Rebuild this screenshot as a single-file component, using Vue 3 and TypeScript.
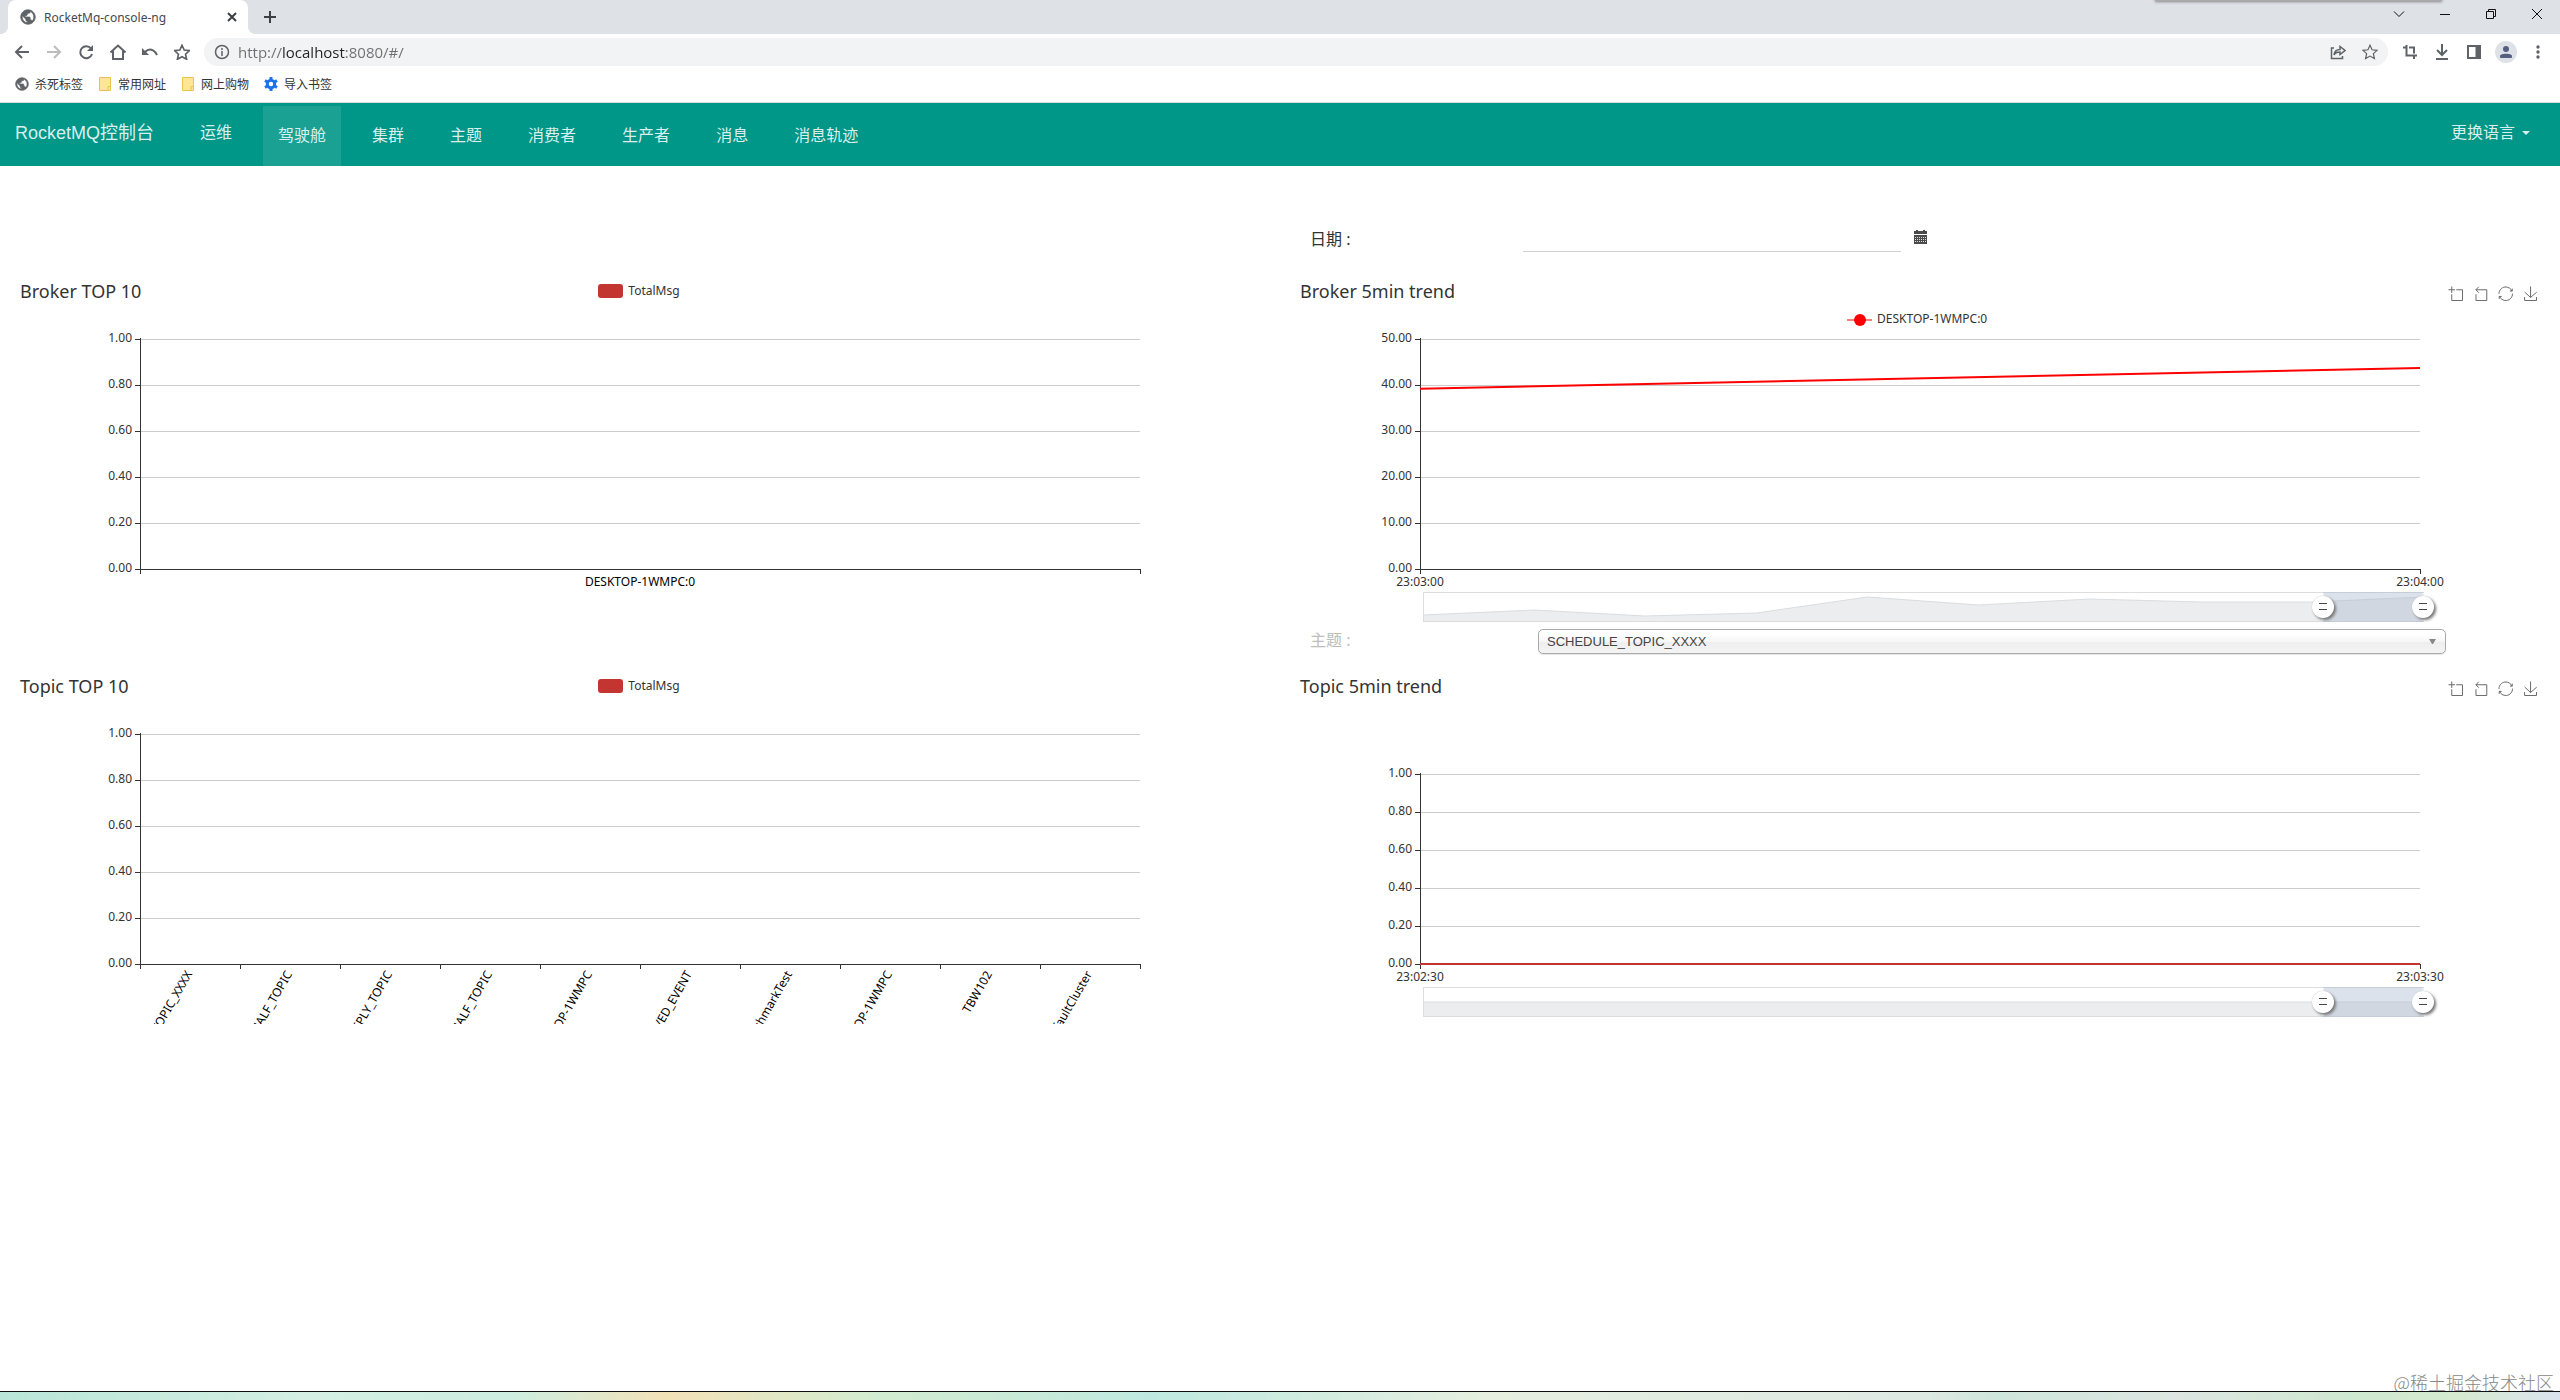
<script setup lang="ts">
import { computed, onMounted, onUnmounted, reactive, ref } from 'vue'

interface ChartModel {
  id: string
  title: string
  kind: 'bar' | 'trend'
  top: number
  yLabels: string[]
  categories: string[]
  series: { name: string; color: string; values: number[]; max: number } | null
  legend: boolean
  overview: number[]
}

const charts = reactive<ChartModel[]>([
  {
    id: 'broker-top', title: 'Broker TOP 10', kind: 'bar', top: 60,
    yLabels: ['1.00', '0.80', '0.60', '0.40', '0.20', '0.00'],
    categories: ['DESKTOP-1WMPC:0'], series: null, legend: true, overview: [],
  },
  {
    id: 'broker-trend', title: 'Broker 5min trend', kind: 'trend', top: 60,
    yLabels: ['50.00', '40.00', '30.00', '20.00', '10.00', '0.00'],
    categories: ['23:03:00', '23:04:00'],
    series: { name: 'DESKTOP-1WMPC:0', color: '#ff0000', values: [39.2, 43.7], max: 50 },
    legend: true, overview: [336, 331, 337, 334, 318, 326, 320, 323, 323, 318],
  },
  {
    id: 'topic-top', title: 'Topic TOP 10', kind: 'bar', top: 60,
    yLabels: ['1.00', '0.80', '0.60', '0.40', '0.20', '0.00'],
    categories: [
      'SCHEDULE_TOPIC_XXXX', 'RMQ_SYS_TRANS_HALF_TOPIC', 'DefaultCluster_REPLY_TOPIC',
      'RMQ_SYS_TRANS_OP_HALF_TOPIC', 'DESKTOP-1WMPC', 'OFFSET_MOVED_EVENT',
      'BenchmarkTest', 'DESKTOP-1WMPC', 'TBW102', 'DefaultCluster',
    ],
    series: null, legend: true, overview: [],
  },
  {
    id: 'topic-trend', title: 'Topic 5min trend', kind: 'trend', top: 100,
    yLabels: ['1.00', '0.80', '0.60', '0.40', '0.20', '0.00'],
    categories: ['23:02:30', '23:03:30'],
    series: { name: 'SCHEDULE_TOPIC_XXXX', color: '#c23531', values: [0, 0], max: 1 },
    legend: false, overview: [328, 328],
  },
])

const zoom = reactive<Record<string, { start: number; end: number }>>({
  'broker-trend': { start: 90, end: 100 },
  'topic-trend': { start: 90, end: 100 },
})

// Chart geometry: the plot keeps a 10% margin on each side of its canvas.
const BOTTOM = 290
const HEAD = 28
const viewport = ref(window.innerWidth)
const width = computed(() => Math.round(viewport.value / 2 - 30))
const left = computed(() => Math.round(width.value * 0.1))
const right = computed(() => width.value - left.value)
const plot = computed(() => right.value - left.value)

const onResize = () => { viewport.value = window.innerWidth }
onMounted(() => window.addEventListener('resize', onResize))
onUnmounted(() => window.removeEventListener('resize', onResize))

const rowY = (c: ChartModel, i: number) => c.top + ((BOTTOM - c.top) / 5) * i
const bandX = (c: ChartModel, i: number) => left.value + (plot.value / c.categories.length) * i
const seriesPoints = (c: ChartModel) =>
  c.series!.values
    .map((v, i, all) => `${left.value + (plot.value / (all.length - 1)) * i},${BOTTOM - (v / c.series!.max) * (BOTTOM - c.top)}`)
    .join(' ')
const overviewPoints = (c: ChartModel) =>
  c.overview.map((y, i, all) => `${left.value + 3 + (plot.value / (all.length - 1)) * i},${y}`).join(' ')

const menu = ['驾驶舱', '集群', '主题', '消费者', '生产者', '消息', '消息轨迹']
const active = ref('驾驶舱')
const url = ref('http://localhost:8080/#/')
const date = ref('')
const topic = ref('SCHEDULE_TOPIC_XXXX')

const tools = [
  { name: '区域缩放', d: 'M0,13.5h26.9 M13.5,26.9V0 M32.1,13.5H58V58H13.5 V32.1' },
  { name: '区域缩放还原', d: 'M22,1.4L9.9,13.5l12.3,12.3 M10.3,13.5H54.9v44.6 H10.3v-26' },
  { name: '还原', d: 'M47,18.9h9.8V8.7 M56.3,20.1 C52.1,9,40.5,0.6,26.8,2.1C12.6,3.7,1.6,16.2,2.1,30.6 M13,41.1H3.1v10.2 M3.7,39.9c4.2,11.1,15.8,19.5,29.5,18 c14.2-1.6,25.2-14.1,24.7-28.5' },
  { name: '保存为图片', d: 'M4.7,22.9L29.3,45.5L54.7,23.4M4.6,43.6L4.6,58L53.8,58L53.8,43.6M29.2,45.1L29.2,0' },
]

const globe = 'M12 2C6.48 2 2 6.48 2 12s4.48 10 10 10 10-4.48 10-10S17.52 2 12 2zm-1 17.93c-3.95-.49-7-3.85-7-7.93 0-.62.08-1.21.21-1.79L9 15v1c0 1.1.9 2 2 2v1.93zm6.9-2.54c-.26-.81-1-1.39-1.9-1.39h-1v-3c0-.55-.45-1-1-1H8v-2h2c.55 0 1-.45 1-1V7h2c1.1 0 2-.9 2-2v-.41c2.93 1.19 5 4.06 5 7.41 0 2.08-.8 3.97-2.1 5.39z'
const star = 'M12 3.5l2.6 5.7 6.2.7-4.6 4.2 1.3 6.1-5.5-3.1-5.5 3.1 1.3-6.1-4.6-4.2 6.2-.7z'
</script>

<template>
  <div class="window">
    <header class="chrome">
      <div class="tabstrip">
        <div class="tab">
          <svg class="fav" viewBox="1 1 22 22"><path :d="globe" fill="#5f6368" stroke="#5f6368" /></svg>
          <span class="tab-title">RocketMq-console-ng</span>
          <button class="ico" aria-label="关闭标签页"><svg viewBox="0 0 16 16"><path d="M4 4l8 8M12 4l-8 8" stroke="#3c4043" stroke-width="2" /></svg></button>
        </div>
        <button class="ico add" aria-label="新标签页"><svg viewBox="0 0 16 16"><path d="M8 2v12M2 8h12" stroke="#3c4043" stroke-width="2" /></svg></button>
        <div class="edge"></div>
        <div class="winctl">
          <button aria-label="搜索标签页"><svg viewBox="0 0 12 12"><path d="M1 3.5l5 5 5-5" /></svg></button>
          <button aria-label="最小化"><svg viewBox="0 0 12 12"><path d="M1 6.5h10" /></svg></button>
          <button aria-label="向下还原"><svg viewBox="0 0 12 12"><path d="M1.5 3.5h7v7h-7zM3.5 3.5v-2h7v7h-2" /></svg></button>
          <button aria-label="关闭"><svg viewBox="0 0 12 12"><path d="M1 1l10 10M11 1L1 11" /></svg></button>
        </div>
      </div>

      <div class="toolbar">
        <div class="navbtns">
          <button aria-label="后退"><svg viewBox="0 0 16 16"><path d="M15 8H2M8 2L2 8l6 6" /></svg></button>
          <button class="off" aria-label="前进"><svg viewBox="0 0 16 16"><path d="M1 8h13M8 2l6 6-6 6" /></svg></button>
          <button aria-label="重新加载"><svg viewBox="0 0 16 16"><path d="M13 4.5A6 6 0 1 0 14 10" /><path d="M15 1v6H9z" fill="#5f6368" stroke="none" /></svg></button>
          <button aria-label="主页"><svg viewBox="0 0 16 16"><path d="M.5 8.5L8 1.5l7.5 7M3 7v8h10V7" /></svg></button>
          <button aria-label="撤销"><svg viewBox="0 0 16 16"><path d="M3 8c4-4 9-3 12 3" /><path d="M0 4v7h7z" fill="#5f6368" stroke="none" /></svg></button>
          <button aria-label="收藏"><svg viewBox="3 2 18 19"><path :d="star" /></svg></button>
        </div>
        <div class="omnibox">
          <svg class="info" viewBox="0 0 16 16"><circle cx="8" cy="8" r="6.5" /><path d="M8 7v5M8 4v2" /></svg>
          <input v-model="url" class="url" type="text" aria-label="地址" />
          <button aria-label="分享"><svg viewBox="0 0 16 16"><path d="M4 4H1.5v10.5h11V12M4 11c.5-4 2.5-5.500 6-5.500V2.500l5 4-5 4V8c-3 0-5 1-6 3z" /></svg></button>
          <button aria-label="为此网页添加书签"><svg viewBox="2 2 20 20"><path :d="star" /></svg></button>
        </div>
        <div class="ext">
          <button aria-label="截图"><svg viewBox="0 0 16 16"><path d="M1 3.5h3M4.5 1v10.5H15M7 3.5h5v6M12 12v3" /></svg></button>
          <button aria-label="下载"><svg viewBox="0 0 16 16"><path d="M8 0v11M3 6l5 5 5-5M2 15h12" /></svg></button>
          <button aria-label="侧边栏"><svg viewBox="0 0 16 16"><path d="M2 2h12v12H2z" /><path d="M9.5 2h5v12h-5z" fill="#5f6368" stroke="none" /></svg></button>
          <button class="avatar" aria-label="个人资料"><svg viewBox="0 0 16 16"><circle cx="8" cy="5" r="3" /><path d="M2 14v-2c0-3 12-3 12 0v2z" /></svg></button>
          <button aria-label="更多"><svg viewBox="0 0 16 16"><g fill="#5f6368" stroke="none"><circle cx="8" cy="3" r="1.7" /><circle cx="8" cy="8" r="1.7" /><circle cx="8" cy="13" r="1.7" /></g></svg></button>
        </div>
      </div>

      <nav class="bookmarks" aria-label="书签">
        <a href="#/"><svg viewBox="1 1 22 22"><path :d="globe" fill="#5f6368" stroke="#5f6368" /></svg>杀死标签</a>
        <a href="#/"><svg viewBox="0 0 14 14"><path d="M1.5.5h11v13h-11zM10 13.5v-4h2.5" fill="#ffe694" stroke="#e9c44a" /></svg>常用网址</a>
        <a href="#/"><svg viewBox="0 0 14 14"><path d="M1.5.5h11v13h-11zM10 13.5v-4h2.5" fill="#ffe694" stroke="#e9c44a" /></svg>网上购物</a>
        <a href="#/"><svg viewBox="0 0 14 14"><circle cx="7" cy="7" r="3.7" fill="none" stroke="#1a73e8" stroke-width="3" /><path d="M7 0v2.5M7 11.5V14M1 3.5l2 1.2M11 9.3l2 1.2M1 10.5l2-1.2M11 4.7l2-1.2" stroke="#1a73e8" stroke-width="3" /></svg>导入书签</a>
      </nav>
    </header>

    <nav class="navbar" aria-label="主导航">
      <a class="brand" href="#/">RocketMQ控制台</a>
      <a class="ops" href="#/ops">运维</a>
      <ul class="menu">
        <li v-for="m in menu" :key="m">
          <a href="#/" :class="{ active: m === active }" @click.prevent="active = m">{{ m }}</a>
        </li>
      </ul>
      <button class="lang">更换语言<svg viewBox="0 0 8 4"><path d="M0 0h8L4 4z" fill="currentColor" /></svg></button>
    </nav>

    <main class="dash">
      <form class="field date-field" @submit.prevent>
        <label for="date">日期 :</label>
        <input id="date" v-model="date" type="text" />
        <button aria-label="选择日期"><svg viewBox="0 0 13 14"><path d="M0 1h2V0h2v1h5V0h2v1h2v3H0zM0 5h13v9H0z" fill="#4a4a4a" /><path d="M1 7.5h11M1 9.5h11M1 11.5h11" stroke="#ddd" stroke-dasharray="1 1" /></svg></button>
      </form>

      <section v-for="c in charts" :key="c.id" class="chart" :class="c.id">
        <header class="chart-head">
          <h2>{{ c.title }}</h2>
          <button v-if="c.kind === 'bar'" class="legend"><i></i>TotalMsg</button>
          <div v-else class="tools">
            <button v-for="t in tools" :key="t.name" :aria-label="t.name"><svg viewBox="-2 -2 62 62"><path :d="t.d" /></svg></button>
          </div>
        </header>

        <svg class="plot" :viewBox="`0 ${HEAD} ${width} 322`" role="img" :aria-label="c.title">
          <g v-if="c.kind === 'trend' && c.legend && c.series">
            <path :d="`M${width / 2 - 73} 41h25`" :stroke="c.series.color" stroke-width="2" opacity="0.5" />
            <circle :cx="width / 2 - 60" cy="41" r="6" :fill="c.series.color" />
            <text :x="width / 2 - 43" y="44">{{ c.series.name }}</text>
          </g>
          <g v-for="(l, i) in c.yLabels" :key="l">
            <path v-if="i < 5" class="grid" :d="`M${left} ${rowY(c, i) + 0.5}H${right}`" />
            <path class="axis" :d="`M${left - 5} ${rowY(c, i) + 0.5}h5`" />
            <text :x="left - 8" :y="rowY(c, i) + 3" text-anchor="end">{{ l }}</text>
          </g>
          <path class="axis" :d="`M${left + 0.5} ${c.top - 1}V${BOTTOM + 5}M${left} ${BOTTOM + 0.5}H${right + 1}`" />

          <template v-if="c.kind === 'bar'">
            <path v-for="(n, i) in c.categories" :key="'t' + i" class="axis" :d="`M${Math.floor(bandX(c, i + 1)) + 0.5} ${BOTTOM}v5`" />
            <text v-if="c.categories.length === 1" class="cat" :x="width / 2" y="307" text-anchor="middle">{{ c.categories[0] }}</text>
            <template v-else>
              <text v-for="(n, i) in c.categories" :key="'c' + i" class="cat" text-anchor="end" :transform="`translate(${bandX(c, i + 0.5) - 1} 298) rotate(-60)`" y="4">{{ n }}</text>
            </template>
          </template>

          <template v-else>
            <path class="axis" :d="`M${right + 0.5} ${BOTTOM}v5`" />
            <text :x="left" y="307" text-anchor="middle">{{ c.categories[0] }}</text>
            <text :x="right" y="307" text-anchor="middle">{{ c.categories[1] }}</text>
            <polyline :points="seriesPoints(c)" fill="none" :stroke="c.series!.color" stroke-width="2" />
            <polygon :points="`${overviewPoints(c)} ${right + 3},342 ${left + 3},342`" fill="#ebedef" />
            <polyline :points="overviewPoints(c)" fill="none" stroke="#d9dde0" />
            <rect :x="left + 3.5" y="313.5" :width="plot" height="29" fill="none" stroke="#ddd" />
            <rect :x="left + 3 + plot * zoom[c.id].start / 100" y="313" :width="plot * (zoom[c.id].end - zoom[c.id].start) / 100" height="30" fill="#a7b7cc" opacity="0.4" />
            <path :d="`M${left + 3 + plot * zoom[c.id].start / 100} 314v28M${left + 3 + plot * zoom[c.id].end / 100} 314v28`" stroke="#fff" />
          </template>
        </svg>
        <div v-if="c.kind === 'trend'" class="zoomer">
          <input v-model.number="zoom[c.id].start" type="range" min="0" max="100" :aria-label="c.title + ' 起点'" />
          <input v-model.number="zoom[c.id].end" type="range" min="0" max="100" :aria-label="c.title + ' 终点'" />
        </div>
      </section>

      <form class="field topic-field" @submit.prevent>
        <label for="topic">主题 :</label>
        <div class="select">
          <select id="topic" v-model="topic"><option>SCHEDULE_TOPIC_XXXX</option></select>
          <svg viewBox="0 0 7 5"><path d="M0 0h7L4 5H3z" fill="#888" /></svg>
        </div>
      </form>
    </main>

    <footer class="foot">
      <span class="mark">@稀土掘金技术社区</span>
      <div class="strip"></div>
    </footer>
  </div>
</template>

<style>
body {
  margin: 0;
  background: #fff;
}
</style>

<style scoped>
.window {
  min-height: 100vh;
  display: flex;
  flex-direction: column;
  font-family: "Noto Sans", "Noto Sans CJK SC", sans-serif;
  font-size: 12px;
  color: #333;
}
button {
  border: 0;
  padding: 0;
  background: none;
  font: inherit;
  color: inherit;
}
svg {
  display: block;
}
a {
  color: inherit;
  text-decoration: none;
}
.chrome {
  border-bottom: 1px solid #dadce0;
}
.tabstrip {
  position: relative;
  height: 34px;
  display: flex;
  align-items: center;
  background: #dee1e6;
  padding-left: 8px;
}
.tab {
  position: relative;
  box-sizing: border-box;
  width: 240px;
  height: 34px;
  padding: 0 8px 0 12px;
  display: flex;
  align-items: center;
  gap: 8px;
  background: #fff;
  border-radius: 8px 8px 0 0;
}
.tab::before,
.tab::after {
  content: "";
  position: absolute;
  bottom: 0;
  width: 8px;
  height: 8px;
}
.tab::before {
  left: -8px;
  background: radial-gradient(circle at 0 0, #dee1e6 8px, #fff 8px);
}
.tab::after {
  right: -8px;
  background: radial-gradient(circle at 100% 0, #dee1e6 8px, #fff 8px);
}
.fav {
  width: 16px;
  height: 16px;
}
.tab-title {
  flex: 1;
  color: #45494d;
}
.ico svg {
  width: 16px;
  height: 16px;
}
.add {
  margin-left: 14px;
}
.edge {
  position: absolute;
  top: -4px;
  right: 118px;
  width: 287px;
  height: 5px;
  background: #aaa;
  box-shadow: 0 1px 3px #888;
}
.winctl {
  margin-left: auto;
  display: flex;
  align-self: flex-start;
}
.winctl button {
  width: 46px;
  height: 28px;
  display: grid;
  place-items: center;
}
.winctl svg {
  width: 12px;
  height: 12px;
  fill: none;
  stroke: #111;
}
.toolbar {
  height: 36px;
  padding: 0 6px;
  display: flex;
  align-items: center;
}
.navbtns,
.ext {
  display: flex;
}
.toolbar button {
  width: 32px;
  height: 28px;
  display: grid;
  place-items: center;
}
.toolbar svg {
  width: 16px;
  height: 16px;
  fill: none;
  stroke: #5f6368;
  stroke-width: 2;
}
.toolbar .off svg {
  stroke: #babcbe;
}
.omnibox {
  flex: 1;
  height: 28px;
  margin: 0 6px;
  padding: 0 2px 0 10px;
  display: flex;
  align-items: center;
  background: #f1f3f4;
  border-radius: 14px;
}
.omnibox svg.info,
.omnibox button svg {
  stroke-width: 1.5;
}
.url {
  flex: 1;
  margin-left: 8px;
  padding: 0;
  border: 0;
  outline: 0;
  font: 15px/20px "Open Sans", sans-serif;
  color: transparent;
  background: linear-gradient(90deg, #6b6f73 45px, #202124 45px, #202124 108px, #6b6f73 108px);
  background-clip: text;
}
.toolbar .avatar svg {
  box-sizing: border-box;
  width: 22px;
  height: 22px;
  padding: 3px;
  border-radius: 50%;
  background: #dee1e6;
  fill: #556080;
  stroke: none;
}
.bookmarks {
  height: 28px;
  padding: 0 15px 4px;
  display: flex;
  align-items: center;
  gap: 15px;
}
.bookmarks a {
  display: flex;
  align-items: center;
  gap: 6px;
}
.bookmarks svg {
  width: 14px;
  height: 14px;
}
.navbar {
  height: 63px;
  display: flex;
  align-items: center;
  background: #009688;
  color: #d9efed;
  font: 16px/24px "Liberation Sans", "Noto Sans CJK SC", sans-serif;
  padding: 0 30px 0 15px;
}
.brand,
.ops,
.lang {
  padding-bottom: 4px;
}
.brand {
  font-size: 18px;
}
.ops {
  margin: 0 31px 0 46px;
}
.menu {
  align-self: stretch;
  margin: 3px 0 0;
  padding: 0;
  display: flex;
  gap: 16px;
  list-style: none;
}
.menu a {
  display: block;
  padding: 18px 15px;
}
.menu .active {
  background: #1aa194;
}
.lang {
  margin-left: auto;
  display: flex;
  align-items: center;
  gap: 7px;
}
.lang svg {
  width: 8px;
  height: 4px;
}
.dash {
  flex: 1;
  display: grid;
  grid-template-columns: 1fr 1fr;
  grid-template-rows: 113px 350px 45px 350px;
}
.field {
  grid-column: 2;
  display: flex;
  padding-left: 30px;
}
.field label {
  font-size: 16px;
  line-height: 22px;
}
.date-field {
  align-items: center;
  padding-top: 33px;
  grid-row: 1;
}
.date-field label {
  width: 213px;
}
.date-field input {
  width: 378px;
  height: 24px;
  padding: 0;
  border: 0;
  border-bottom: 1px solid #d2d2d2;
}
.date-field button {
  margin: 0 0 4px 13px;
}
.date-field button svg {
  width: 13px;
  height: 14px;
}
.topic-field {
  grid-row: 3;
  padding-right: 114px;
}
.topic-field label {
  width: 228px;
  color: #bdbdbd;
}
.select {
  position: relative;
  flex: 1;
}
.select select {
  display: block;
  width: 100%;
  height: 25px;
  padding: 0 8px;
  appearance: none;
  border: 1px solid #aaa;
  border-radius: 5px;
  background: linear-gradient(#fff 20%, #f6f6f6 50%, #eee 52%, #f4f4f4 100%);
  box-shadow: 0 1px 1px rgba(0, 0, 0, 0.1);
  font: 13px "Liberation Sans", sans-serif;
  color: #444;
}
.select svg {
  position: absolute;
  right: 10px;
  top: 10px;
  width: 7px;
  height: 5px;
  pointer-events: none;
}
.chart {
  position: relative;
  margin: 0 15px;
  min-width: 0;
}
.broker-top,
.broker-trend {
  grid-row: 2;
}
.topic-top,
.topic-trend {
  grid-row: 4;
}
.broker-top,
.topic-top {
  grid-column: 1;
}
.broker-trend,
.topic-trend {
  grid-column: 2;
}
.chart-head {
  height: 28px;
  padding: 0 7px 0 5px;
  display: grid;
  grid-template-columns: 1fr auto 1fr;
  align-items: start;
}
.chart-head h2 {
  margin: 0;
  font-size: 18px;
  line-height: 24px;
  font-weight: 400;
}
.legend {
  display: flex;
  align-items: center;
  gap: 5px;
  line-height: 24px;
}
.legend i {
  width: 25px;
  height: 14px;
  border-radius: 3px;
  background: #c23531;
}
.tools {
  grid-column: 3;
  justify-self: end;
  display: flex;
  gap: 10px;
  padding-top: 7px;
}
.tools svg {
  width: 15px;
  height: 15px;
  fill: none;
  stroke: #666;
  stroke-width: 4;
}
.plot {
  width: 100%;
  height: 322px;
  overflow: hidden;
  font-size: 12px;
}
.plot text {
  fill: #333;
}
.plot .cat {
  fill: #000;
}
.grid {
  stroke: #ccc;
}
.axis {
  fill: none;
  stroke: #333;
}
.zoomer {
  position: absolute;
  left: calc(10% - 8px);
  top: 317px;
  width: calc(80% + 22px);
  height: 22px;
}
.zoomer input {
  position: absolute;
  inset: 0;
  width: 100%;
  height: 22px;
  margin: 0;
  appearance: none;
  background: none;
  pointer-events: none;
}
.zoomer input::-webkit-slider-thumb {
  appearance: none;
  width: 22px;
  height: 22px;
  border-radius: 50%;
  pointer-events: auto;
  background:
    linear-gradient(#444, #444) 50% 7px / 8px 1px no-repeat,
    linear-gradient(#444, #444) 50% 13px / 8px 1px no-repeat,
    #fff;
  box-shadow: 2px 2px 3px #777, 0 0 1px #bbb;
}
.foot {
  display: flex;
  flex-direction: column;
  align-items: flex-end;
}
.mark {
  margin-right: 6px;
  font: 300 18px/18px "Noto Sans CJK SC", sans-serif;
  color: #888;
}
.strip {
  box-sizing: border-box;
  width: 100%;
  height: 9px;
  border-top: 1px solid #111;
  background: linear-gradient(90deg, #b9e6d8, #d5efe4 12%, #cdeee0 20%, #f3e2b8 26%, #d3ecd0 34%, #bfe9e0 45%, #e6efe0 58%, #dfe9e4 75%, #cfe6dd 78%, #dde6e2 85%, #cfe8d0 92%, #d5ead0 96%, #dbe3ee);
}
</style>
